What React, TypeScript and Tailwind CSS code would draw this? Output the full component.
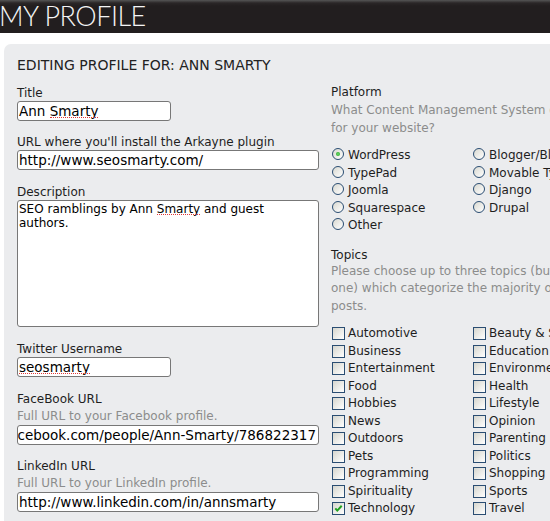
import React from "react";

const Label = ({ children, className = "" }: { children: React.ReactNode; className?: string }) => (
  <div className={"text-[12px] leading-[15px] text-[#1e1e1e] whitespace-nowrap " + className}>{children}</div>
);

const Help = ({ children, className = "" }: { children: React.ReactNode; className?: string }) => (
  <div className={"text-[12px] leading-[18px] text-[#8c8c8c] whitespace-nowrap " + className}>{children}</div>
);

const Spell = ({ children }: { children: React.ReactNode }) => (
  <span className="relative">
    {children}
    <span className="absolute bottom-[1px] left-0 right-0 h-0 border-b border-dotted border-[#e03838]" />
  </span>
);

const Input = ({ children, wide, right }: { children: React.ReactNode; wide?: boolean; right?: boolean }) => (
  <div
    className={
      (wide ? "w-[302px] " : "w-[154px] ") +
      (right ? "text-right pr-[2px] " : "text-left px-[1px] ") +
      "h-[20px] overflow-hidden whitespace-nowrap rounded-[3px] border border-[#777777] bg-white text-[13.5px] leading-[19px] text-black"
    }
  >
    {right ? <div className="float-right">{children}</div> : children}
  </div>
);

const Radio = ({ label, checked }: { label: string; checked?: boolean }) => (
  <div className="flex items-start whitespace-nowrap text-[12px] leading-[17.5px] text-[#1e1e1e]">
    <span className="relative ml-[1px] mt-[1px] h-[12px] w-[12px] shrink-0 rounded-full border border-[#2a4d72] bg-[linear-gradient(135deg,#d8d8d0,#ffffff)]">
      {checked && (
        <span className="absolute left-[3px] top-[3px] h-[4px] w-[4px] rounded-full bg-[radial-gradient(circle,#6de06d,#1c961c)]" />
      )}
    </span>
    <span className="ml-[4px]">{label}</span>
  </div>
);

const Check = ({ label, checked }: { label: string; checked?: boolean }) => (
  <div className="flex items-start whitespace-nowrap text-[12px] leading-[17.5px] text-[#1e1e1e]">
    <span className="relative ml-[1px] mt-[2px] h-[13px] w-[13px] shrink-0 border border-[#2a4d72] bg-[linear-gradient(135deg,#d6d6ce,#ffffff)]">
      {checked && (
        <svg className="absolute left-0 top-0" width="11" height="11" viewBox="0 0 11 11">
          <polyline points="2.3,5.3 4.3,7.6 8.7,2.8" fill="none" stroke="#21a121" strokeWidth="2" />
        </svg>
      )}
    </span>
    <span className="ml-[3px]">{label}</span>
  </div>
);

export default function App() {
  const topicsL = ["Automotive", "Business", "Entertainment", "Food", "Hobbies", "News", "Outdoors", "Pets", "Programming", "Spirituality", "Technology"];
  const topicsR = ["Beauty & Style", "Education", "Environment", "Health", "Lifestyle", "Opinion", "Parenting", "Politics", "Shopping", "Sports", "Travel"];
  return (
    <div className="h-[521px] w-[550px] overflow-hidden bg-white font-['DejaVu_Sans',Verdana,sans-serif]">
      <div className="h-[33px] w-full bg-[linear-gradient(to_bottom,#555555_0px,#2a2627_3px,#221e1f_6px,#221e1f_100%)]">
        <div className="ml-[-1px] pt-[1px] font-['Lato',sans-serif] text-[27px] font-light leading-[30px] tracking-[-0.5px] text-[#f4f4f4]">MY PROFILE</div>
      </div>
      <div className="ml-[4px] mt-[11px] w-[700px] rounded-tl-[7px] bg-[#ebecee] pb-[20px] pl-[13px] pt-[13px]">
        <div className="text-[14px] leading-[16px] text-[#222]">EDITING PROFILE FOR: ANN SMARTY</div>
        <div className="mt-[13px] flex gap-[12px]">
          <div className="w-[302px] shrink-0">
            <Label>Title</Label>
            <Input>
              Ann <Spell>Smarty</Spell>
            </Input>
            <Label className="mt-[14px]">URL where you'll install the Arkayne plugin</Label>
            <Input wide>http://www.seosmarty.com/</Input>
            <Label className="mt-[15px]">Description</Label>
            <div className="h-[127px] w-[302px] rounded-[3px] border border-[#777777] bg-white px-[1px] pt-[1px] text-[12px] leading-[14px] text-black">
              SEO ramblings by Ann <Spell>Smarty</Spell> and guest
              <br />
              authors.
            </div>
            <Label className="mt-[15px]">Twitter Username</Label>
            <Input>
              <Spell>seosmarty</Spell>
            </Input>
            <Label className="mt-[15px]">FaceBook URL</Label>
            <Help>Full URL to your Facebook profile.</Help>
            <Input wide right>
              http://www.facebook.com/people/Ann-Smarty/786822317
            </Input>
            <Label className="mt-[14px]">LinkedIn URL</Label>
            <Help>Full URL to your LinkedIn profile.</Help>
            <Input wide>http://www.linkedin.com/in/annsmarty</Input>
          </div>
          <div className="mt-[-1px] w-[300px] shrink-0">
            <Label>Platform</Label>
            <div className="mt-[2px] whitespace-nowrap text-[12px] leading-[17.5px] text-[#8c8c8c]">
              What Content Management System do you use
              <br />
              for your website?
            </div>
            <div className="mt-[10px] grid grid-cols-[141px_141px]">
              <Radio label="WordPress" checked />
              <Radio label="Blogger/Blogspot" />
              <Radio label="TypePad" />
              <Radio label="Movable Type" />
              <Radio label="Joomla" />
              <Radio label="Django" />
              <Radio label="Squarespace" />
              <Radio label="Drupal" />
              <Radio label="Other" />
            </div>
            <Label className="mt-[13px]">Topics</Label>
            <div className="whitespace-nowrap text-[12px] leading-[17.5px] text-[#8c8c8c]">
              Please choose up to three topics (but at least
              <br />
              one) which categorize the majority of your
              <br />
              posts.
            </div>
            <div className="mt-[10px] grid grid-cols-[141px_141px]">
              {topicsL.map((t, i) => (
                <React.Fragment key={t}>
                  <Check label={t} checked={t === "Technology"} />
                  <Check label={topicsR[i]} />
                </React.Fragment>
              ))}
            </div>
          </div>
        </div>
      </div>
    </div>
  );
}
